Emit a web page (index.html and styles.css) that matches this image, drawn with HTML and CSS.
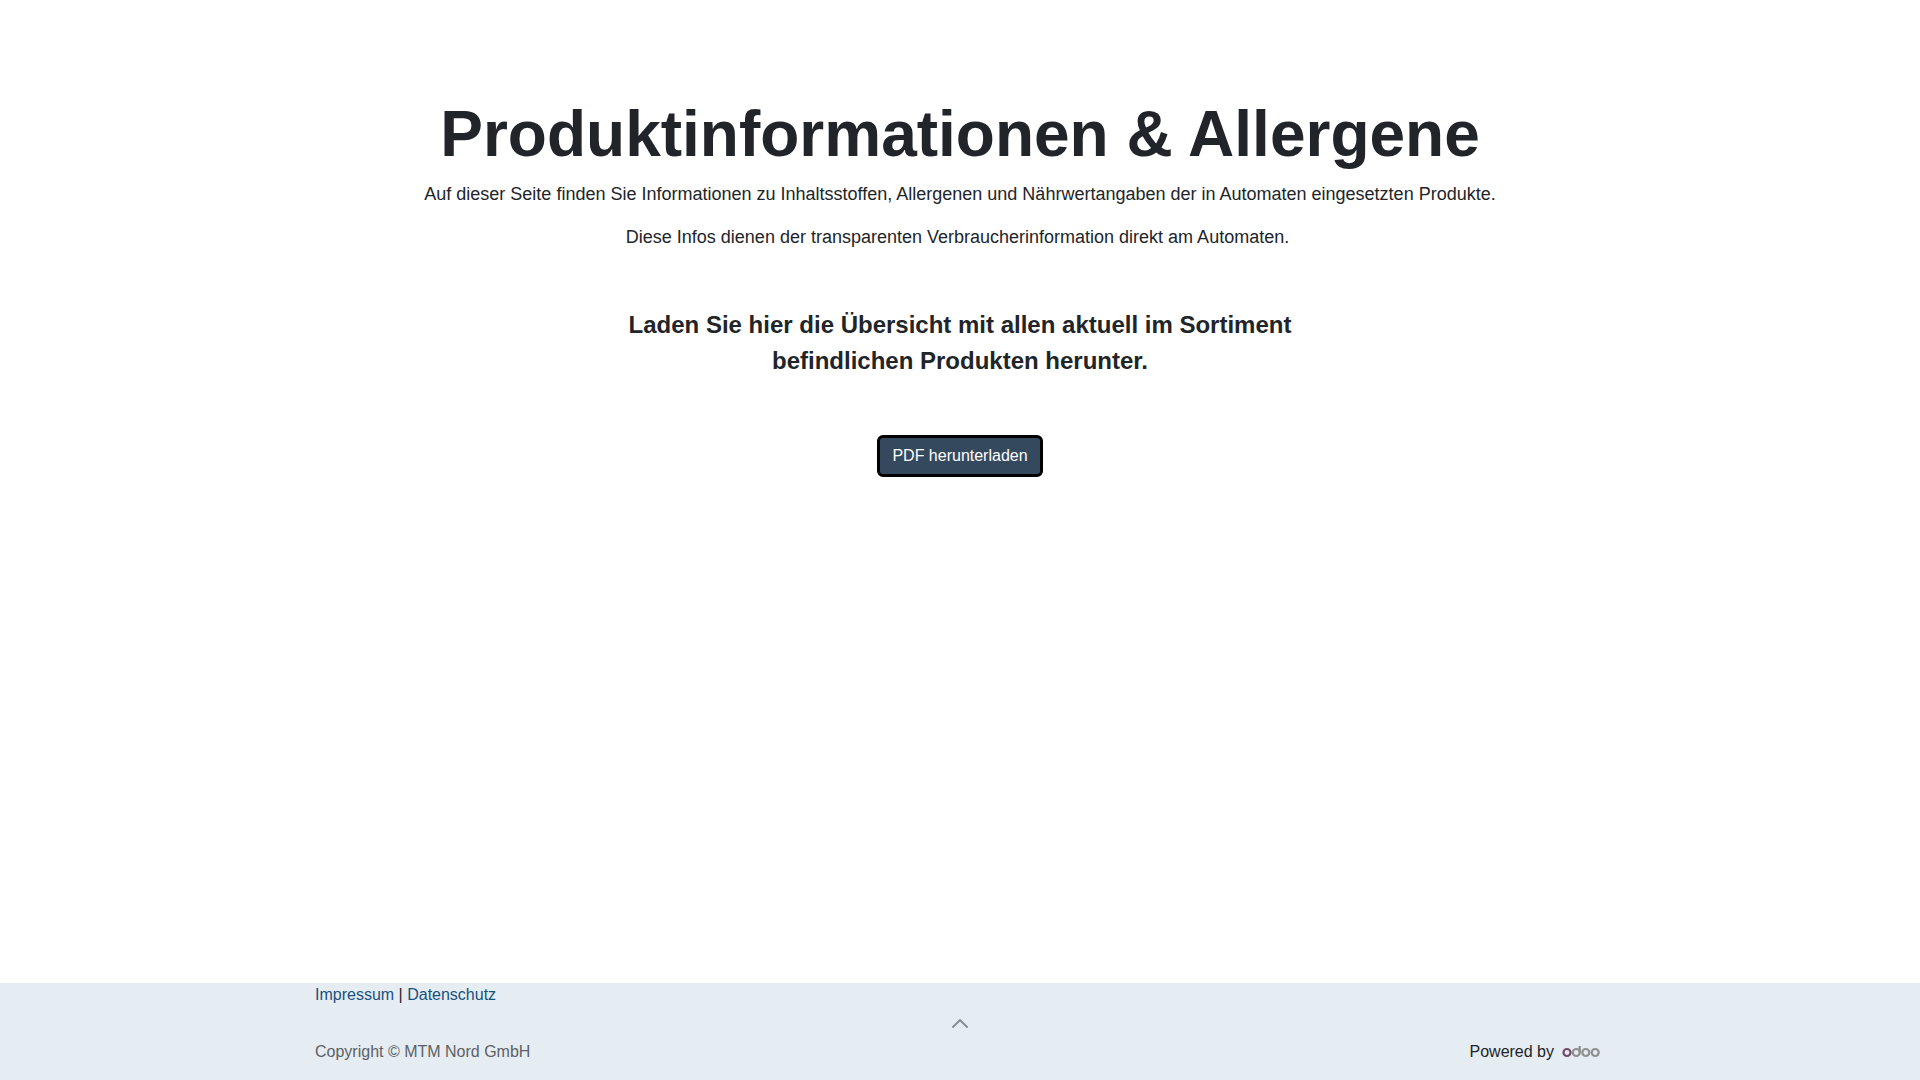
FILE: index.html
```html
<!DOCTYPE html>
<html lang="de">
<head>
  <meta charset="UTF-8">
  <meta name="viewport" content="width=device-width, initial-scale=1.0">
  <title>Produktinformationen &amp; Allergene</title>
  <link rel="stylesheet" href="styles.css">
</head>
<body>
  <main class="content">
    <!-- Intro -->
    <section class="intro">
      <h1>Produktinformationen &amp; Allergene</h1>
      <p>Auf dieser Seite finden Sie Informationen zu Inhaltsstoffen, Allergenen und Nährwertangaben der in Automaten eingesetzten Produkte.</p>
      <p>Diese Infos dienen der transparenten Verbraucherinformation direkt am Automaten.&nbsp;</p>
    </section>

    <!-- Download -->
    <section class="download">
      <h2>Laden Sie hier die Übersicht mit allen aktuell im Sortiment befindlichen Produkten herunter.</h2>
      <a href="#" class="btn">PDF herunterladen</a>
    </section>
  </main>

  <footer class="footer">
    <div class="container">
      <nav class="legal">
        <a href="#">Impressum</a> | <a href="#">Datenschutz</a>
      </nav>
      <a href="#" class="scroll-top" aria-label="Nach oben">
        <svg width="16" height="9" viewBox="0 0 16 9" fill="none" stroke="#85898d" stroke-width="1.8" stroke-linecap="round">
          <path d="M1 8 L8 1 L15 8"/>
        </svg>
      </a>
      <div class="copyright">
        <span class="owner">Copyright © MTM Nord GmbH</span>
        <span class="powered">
          Powered by
          <a href="#" class="logo" aria-label="Odoo">
            <svg width="38" height="14" viewBox="0 0 38 14" fill="none" stroke="#8f8f8f" stroke-width="2.2">
              <circle cx="5" cy="7.5" r="3.5" stroke="#714b67"/>
              <circle cx="14.3" cy="7.5" r="3.5"/>
              <path d="M17.7 1 V7.5"/>
              <circle cx="23.8" cy="7.5" r="3.5"/>
              <circle cx="33.2" cy="7.5" r="3.5"/>
            </svg>
          </a>
        </span>
      </div>
    </div>
  </footer>
</body>
</html>
```

FILE: styles.css
```css
* {
  box-sizing: border-box;
}
body {
  display: flex;
  flex-direction: column;
  min-height: 100vh;
  margin: 0;
  font-family: "Liberation Sans", Arial, sans-serif;
  font-size: 16px;
  line-height: 24px;
  color: #212529;
  background-color: #fff;
}
a {
  color: #17517e;
  text-decoration: none;
}
.content {
  flex: 1;
  padding: 96px 16px 40px;
  text-align: center;
}
.intro h1 {
  margin: 0 0 8px;
  font-size: 64px;
  line-height: 77px;
}
.intro p {
  margin: 0 0 16px;
  font-size: 18px;
  line-height: 27px;
}
.download {
  display: flex;
  flex-direction: column;
  align-items: center;
  gap: 56px;
  margin-top: 56px;
}
.download h2 {
  max-width: 720px;
  margin: 0;
  font-size: 24px;
  line-height: 36px;
}
.btn {
  padding: 6px 12px;
  border: 3px solid #000;
  border-radius: 6px;
  background-color: #35495e;
  color: #fff;
}

/* Footer */
.footer {
  background-color: #e5ecf2;
}
.container {
  width: 100%;
  max-width: 1320px;
  margin: 0 auto;
  padding: 0 15px 16px;
}
.scroll-top {
  display: flex;
  align-items: center;
  justify-content: center;
  height: 33px;
}
.copyright {
  display: flex;
  justify-content: space-between;
}
.owner {
  color: #5c6165;
}
.powered {
  display: flex;
  align-items: center;
  gap: 8px;
}
.logo {
  display: flex;
  padding-right: 5px;
}
```
